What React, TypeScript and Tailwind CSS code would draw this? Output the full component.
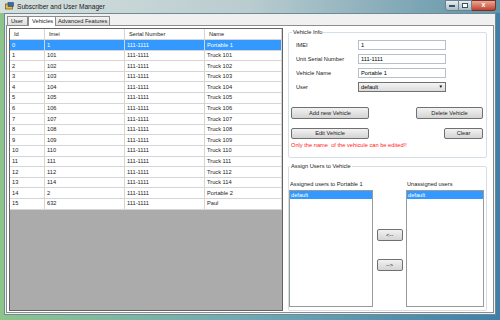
import React from "react";

const rows = [
  ["0", "1", "111-1111", "Portable 1"],
  ["1", "101", "111-1111", "Truck 101"],
  ["2", "102", "111-1111", "Truck 102"],
  ["3", "103", "111-1111", "Truck 103"],
  ["4", "104", "111-1111", "Truck 104"],
  ["5", "105", "111-1111", "Truck 105"],
  ["6", "106", "111-1111", "Truck 106"],
  ["7", "107", "111-1111", "Truck 107"],
  ["8", "108", "111-1111", "Truck 108"],
  ["9", "109", "111-1111", "Truck 109"],
  ["10", "110", "111-1111", "Truck 110"],
  ["11", "111", "111-1111", "Truck 111"],
  ["12", "112", "111-1111", "Truck 112"],
  ["13", "114", "111-1111", "Truck 114"],
  ["14", "2", "111-1111", "Portable 2"],
  ["15", "632", "111-1111", "Paul"],
];

const cols = ["w-[35px]", "w-[80px]", "w-[80px]", "flex-1"];

function Btn({ label, className }: { label: string; className: string }) {
  return (
    <div
      className={`flex items-center justify-center border border-[#707070] rounded-[2px] bg-gradient-to-b from-[#f2f2f2] to-[#d4d4d4] text-[5.7px] text-[#222] ${className}`}
    >
      {label}
    </div>
  );
}

function Field({ label, value, combo }: { label: string; value: string; combo?: boolean }) {
  return (
    <div className="flex items-center h-[10px]">
      <span className="w-[69px] pl-[7px] text-[5.7px] text-[#222]">{label}</span>
      <div
        className={`w-[88px] h-[10px] flex items-center justify-between px-[2px] text-[5.7px] ${
          combo ? "border border-[#707070] bg-gradient-to-b from-[#f4f4f4] to-[#dcdcdc]" : "border border-[#b5c0c8] bg-white"
        }`}
      >
        <span>{value}</span>
        {combo && <span className="text-[4.5px]">▼</span>}
      </div>
    </div>
  );
}

export default function App() {
  return (
    <div
      className="w-[500px] h-[320px] flex flex-col overflow-hidden bg-gradient-to-r from-[#8cc48a] via-[#6fa8b4] to-[#3f7fa8]"
      style={{ fontFamily: '"Liberation Sans", Arial, sans-serif' }}
    >
      {/* title bar */}
      <div className="h-[13px] flex items-center justify-between bg-gradient-to-r from-[#d6e0de] via-[#b9ccd0] to-[#5e93a6]">
        <div className="flex items-center gap-[3px] pl-[5px]">
          <svg width="9" height="8" viewBox="0 0 9 8">
            <rect x="0.5" y="2" width="7" height="5" fill="#e8c040" stroke="#6a5010" strokeWidth="0.7" />
            <rect x="3" y="0.5" width="5.5" height="4" fill="#3a6aa0" stroke="#203860" strokeWidth="0.5" />
          </svg>
          <span className="text-[6.6px] text-[#1a1a1a]">Subscriber and User Manager</span>
        </div>
        <div className="flex items-start h-full pr-[4px]">
          <div className="w-[14px] h-[11px] border border-[#6a8090] rounded-bl-[3px] bg-gradient-to-b from-[#e8eef0] to-[#a8bcc4] flex items-end justify-center pb-[3px]">
            <div className="w-[6px] h-[2px] bg-white border border-[#405060]" />
          </div>
          <div className="w-[13px] h-[11px] border-y border-r border-[#6a8090] bg-gradient-to-b from-[#e8eef0] to-[#a8bcc4] flex items-center justify-center">
            <div className="w-[6px] h-[5px] border border-[#405060] bg-white" />
          </div>
          <div className="w-[24px] h-[11px] border-y border-r border-[#7a3028] rounded-br-[3px] bg-gradient-to-b from-[#e8a898] to-[#c0402c] flex items-center justify-center text-[7px] font-bold text-white">
            x
          </div>
        </div>
      </div>

      {/* client area */}
      <div className="flex-1 mx-[4px] mb-[5px] bg-[#f0f0f0] border border-[#6c8a98] flex flex-col pt-[1px] px-[1px] pb-[1px]">
        <div className="flex items-end h-[10px] text-[5.7px] text-[#222] pl-[1px]">
          <div className="w-[21px] h-[9px] pl-[3px] border border-b-0 border-[#8c8c8c] bg-gradient-to-b from-[#f4f4f4] to-[#dedede] flex items-center">User</div>
          <div className="w-[28px] h-[10px] pl-[3px] border border-b-0 border-[#8c8c8c] bg-white flex items-center relative top-[1px]">Vehicles</div>
          <div className="w-[54px] h-[9px] pl-[2px] border border-b-0 border-l-0 border-[#8c8c8c] bg-gradient-to-b from-[#f4f4f4] to-[#dedede] flex items-center">Advanced Features</div>
        </div>
        <div className="flex-1 bg-white border border-[#8c8c8c] flex pl-[2px] pt-[2px] pb-[1px] pr-[6px] gap-[5px]">
          {/* grid */}
          <div className="w-[277px] border border-[#646464] bg-[#ababab] flex flex-col">
            <div className="h-[11px] flex bg-white border-b border-[#d5d5d5] text-[5.7px] text-[#222]">
              {["Id", "Imei", "Serial Number", "Name"].map((h, i) => (
                <div key={h} className={`${cols[i]} border-r border-[#d5d5d5] pl-[4px] flex items-center`}>
                  {h}
                </div>
              ))}
            </div>
            {rows.map((r, ri) => (
              <div
                key={ri}
                className={`h-[10.6px] flex border-b border-[#d5d5d5] text-[5.7px] ${
                  ri === 0 ? "bg-[#3399ff] text-white" : "bg-white text-[#222]"
                }`}
              >
                {r.map((c, ci) => (
                  <div key={ci} className={`${cols[ci]} border-r border-[#d5d5d5] pl-[2px] flex items-center`}>
                    {c}
                  </div>
                ))}
              </div>
            ))}
          </div>

          {/* right side */}
          <div className="flex-1 flex flex-col pt-[4px]">
            <div className="relative h-[126px] border border-[#d5dfe5] rounded-[2px] flex flex-col pt-[7px] gap-[4px]">
              <span className="absolute -top-[5px] left-[3px] px-[1px] bg-white text-[5.7px] text-[#222]">Vehicle Info</span>
              <Field label="IMEI" value="1" />
              <Field label="Unit Serial Number" value="111-1111" />
              <Field label="Vehicle Name" value="Portable 1" />
              <Field label="User" value="default" combo />
              <div className="flex justify-between pl-[2px] pr-[3px] mt-[11px]">
                <Btn label="Add new Vehicle" className="w-[78px] h-[12px]" />
                <Btn label="Delete Vehicle" className="w-[67px] h-[12px]" />
              </div>
              <div className="flex justify-between pl-[2px] pr-[3px] mt-[5px]">
                <Btn label="Edit Vehicle" className="w-[78px] h-[11px]" />
                <Btn label="Clear" className="w-[39px] h-[11px]" />
              </div>
              <span className="pl-[2px] text-[5.7px] text-[#ff2020] -mt-[2px]">Only the name&nbsp; of the vehicule can be edited!!</span>
            </div>

            <div className="relative flex-1 mt-[8px] border border-[#d5dfe5] rounded-[2px] flex flex-col pt-[13px]">
              <span className="absolute -top-[5px] left-[1px] px-[1px] bg-white text-[5.7px] text-[#222]">Assign Users to Vehicle</span>
              <div className="flex text-[5.7px] text-[#222] h-[10px]">
                <span className="w-[118px] pl-[1px]">Assigned users to Portable 1</span>
                <span>Unassigned users</span>
              </div>
              <div className="flex flex-1 pb-[3px] pr-[2px]">
                <div className="w-[84px] border border-[#9a9a9a] bg-white">
                  <div className="h-[8px] bg-[#3399ff] text-white text-[5.7px] pl-[1px] flex items-center">default</div>
                </div>
                <div className="w-[33px] flex flex-col items-center pt-[39px] gap-[18px]">
                  <Btn label="<--" className="w-[26px] h-[12px]" />
                  <Btn label="-->" className="w-[26px] h-[12px]" />
                </div>
                <div className="w-[78px] border border-[#9a9a9a] bg-white">
                  <div className="h-[8px] bg-[#3399ff] text-white text-[5.7px] pl-[1px] flex items-center">default</div>
                </div>
              </div>
            </div>
          </div>
        </div>
      </div>
    </div>
  );
}
